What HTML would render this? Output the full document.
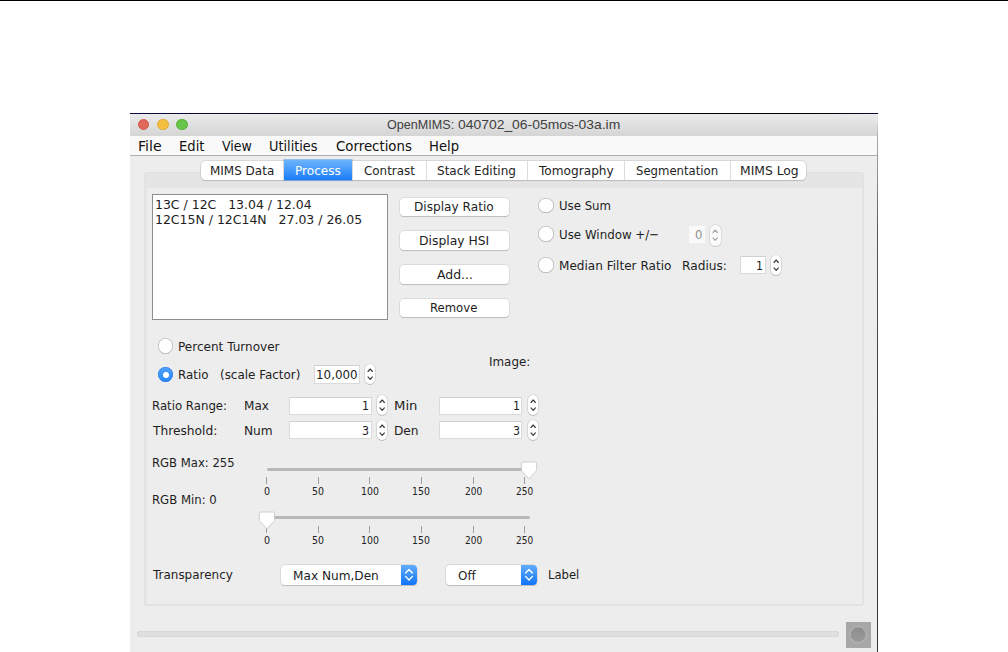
<!DOCTYPE html>
<html lang="en"><head><meta charset="utf-8"><title>OpenMIMS: 040702_06-05mos-03a.im</title>
<style>
html,body{margin:0;padding:0;background:#fff;}
body{width:1008px;height:652px;position:relative;overflow:hidden;font-family:"DejaVu Sans","Liberation Sans",sans-serif;}
.a{position:absolute;box-sizing:border-box;}
.t{position:absolute;white-space:pre;transform-origin:0 50%;display:block;}
#topline{left:0;top:0;width:1008px;height:1px;background:#000;}
#win{left:130px;top:113px;width:748px;height:539px;background:#ededed;overflow:hidden;}
#winborder{left:0;top:0;width:748px;height:1px;background:linear-gradient(90deg,#0c0c44,#000 55%,#000 92%,#0c0c44);}
#titlebar{left:0;top:1px;width:748px;height:21.5px;background:linear-gradient(#ebebeb,#d5d5d5);border-radius:5px 5px 0 0;}
#menubar{left:0;top:22.5px;width:748px;height:19.5px;background:#f9f9f9;}
#menusep{left:0;top:42px;width:748px;height:1.3px;background:#adadad;}
#rightedge{left:747px;top:8px;width:1px;height:531px;background:linear-gradient(rgba(160,160,160,0) 0px,#a8a8a8 18px,#8a8a8a 60px,#555 110px,#3c3c3c 300px,#333 531px);}
.tl{width:11.6px;height:11.6px;border-radius:50%;top:5.9px;}
#tl-r{left:7.9px;background:#e1695b;border:0.5px solid #d05a4c;}
#tl-y{left:27.1px;background:#f4bf41;border:0.5px solid #dfa935;}
#tl-g{left:46.2px;background:#68c54a;border:0.5px solid #55ae3a;}
/* tab pane */
#pane{left:14px;top:59.3px;width:719.6px;height:433.7px;background:#e5e5e5;border-radius:4px;box-shadow:inset 0 0 0 0.6px #dedede;}
#paneinner{left:3px;top:15.6px;width:715.2px;height:415.7px;background:#ededed;border-radius:1px;}
#tabs{left:71px;top:47.5px;width:605.3px;height:19.3px;background:#fff;border-radius:4.5px;box-shadow:0 0 0 0.6px #c4c4c4,0 1px 0.8px rgba(0,0,0,0.22);}
.tabdiv{top:0px;width:1px;height:19.3px;background:#dcdcdc;}
#tabsel{left:82.5px;top:-0.7px;width:68.6px;height:20.2px;background:linear-gradient(#6cb4fb,#1b7df8);box-shadow:0 0 0 0.5px #3a8be6;}
/* list */
#list{left:22px;top:81px;width:236px;height:126px;background:#fff;border:1px solid #8e8e8e;}
/* buttons */
.btn{left:270px;width:108.5px;height:18.8px;background:#fff;border-radius:4px;box-shadow:0 0 0 0.5px #c9c9c9,0 1px 0.7px rgba(0,0,0,0.25);}
/* radios */
.radio{width:15.4px;height:15.4px;border-radius:50%;background:#fff;box-shadow:inset 0 0 0 0.8px #bdbdbd, inset 0 -0.6px 0.5px #a5a5a5;}
.radio.on{background:linear-gradient(#4da2fb,#2a86f6);box-shadow:inset 0 0 0 0.5px #2f7fe6;}
.radio.on::after{content:"";position:absolute;left:4.7px;top:4.7px;width:6px;height:6px;border-radius:50%;background:#fff;}
/* spinner fields */
.field{background:#fff;border:1px solid #dadada;border-top-color:#d0d0d0;}
.step{width:10.4px;height:20.2px;border-radius:5.2px;background:#fff;box-shadow:0 0 0 0.6px #c6c6c6,0 1px 0.6px rgba(0,0,0,0.2);}
.step svg{position:absolute;left:0;top:0;}
/* sliders */
.track{height:3px;border-radius:1.5px;background:#b8b8b8;}
.tick{width:1px;height:6.5px;background:#9e9e9e;}
/* combos */
.combo{height:19.2px;background:#fff;border-radius:4px;box-shadow:0 0 0 0.5px #c9c9c9,0 1px 0.7px rgba(0,0,0,0.25);}
.combo .arrow{position:absolute;right:0;top:0;width:15.8px;height:19.2px;border-radius:0 4px 4px 0;background:linear-gradient(#62adfb,#1273f8);}
.combo svg{position:absolute;left:0;top:0;}
/* progress */
#prog{left:7.2px;top:518.2px;width:701.5px;height:6px;border-radius:3px;background:#dfdfdf;box-shadow:inset 0 0 0 0.6px #d2d2d2;}
#stop{left:716px;top:509px;width:24.7px;height:25.5px;background:#a7a7a7;}
.lib{font-family:"Liberation Sans",sans-serif;}

</style></head>
<body>
<div class="a" id="topline"></div>
<div class="a" id="win">
  <div class="a" id="titlebar"></div>
  <div class="a" id="winborder"></div>
  <div class="a tl" id="tl-r"></div><div class="a tl" id="tl-y"></div><div class="a tl" id="tl-g"></div>
  <div class="a" id="menubar"></div>
  <div class="a" id="menusep"></div>
  <div class="a" id="rightedge"></div>
  <div class="a" id="pane"><div class="a" id="paneinner"></div></div>
  <div class="a" id="tabs">
    <div class="a" id="tabsel"></div>
    <div class="a tabdiv" style="left:82px"></div>
    <div class="a tabdiv" style="left:151px"></div>
    <div class="a tabdiv" style="left:225px"></div>
    <div class="a tabdiv" style="left:326px"></div>
    <div class="a tabdiv" style="left:423.2px"></div>
    <div class="a tabdiv" style="left:528.5px"></div>
  </div>
  <div class="a" id="list"></div>
  <div class="a btn" style="top:84.5px"></div>
  <div class="a btn" style="top:118.3px"></div>
  <div class="a btn" style="top:151.9px"></div>
  <div class="a btn" style="top:185.5px"></div>
  <!-- right radios -->
  <div class="a radio" style="left:408.3px;top:84.6px"></div>
  <div class="a radio" style="left:408.3px;top:113.4px"></div>
  <div class="a radio" style="left:408.3px;top:144.3px"></div>
  <!-- spinner window -->
  <div class="a" style="left:558.5px;top:112.5px;width:16.7px;height:17.7px;background:#fafafa"></div>
  <div class="a step" style="left:580.4px;top:112.4px;opacity:.8"><svg width="10.4" height="20.2" viewBox="0 0 10.4 20.2"><path d="M3 7.5 L5.2 5 L7.4 7.5 M3 12.9 L5.2 15.4 L7.4 12.9" fill="none" stroke="#9a9a9a" stroke-width="1.2" stroke-linecap="round" stroke-linejoin="round"/></svg></div>
  <!-- spinner radius -->
  <div class="a field" style="left:610.4px;top:143.2px;width:25.4px;height:18px"></div>
  <div class="a step" style="left:640.5px;top:142px"><svg width="10.4" height="20.2" viewBox="0 0 10.4 20.2"><path d="M3 7.5 L5.2 5 L7.4 7.5 M3 12.9 L5.2 15.4 L7.4 12.9" fill="none" stroke="#3a3a3a" stroke-width="1.15" stroke-linecap="round" stroke-linejoin="round"/></svg></div>
  <!-- left radios -->
  <div class="a radio" style="left:28px;top:225.2px"></div>
  <div class="a radio on" style="left:28px;top:254px"></div>
  <!-- spinner scale -->
  <div class="a field" style="left:183.9px;top:252px;width:45.7px;height:18.8px"></div>
  <div class="a step" style="left:234.5px;top:251.3px"><svg width="10.4" height="20.2" viewBox="0 0 10.4 20.2"><path d="M3 7.5 L5.2 5 L7.4 7.5 M3 12.9 L5.2 15.4 L7.4 12.9" fill="none" stroke="#3a3a3a" stroke-width="1.15" stroke-linecap="round" stroke-linejoin="round"/></svg></div>
  <!-- ratio range / threshold fields -->
  <div class="a field" style="left:158.5px;top:283.5px;width:83.2px;height:18px"></div>
  <div class="a step" style="left:246.7px;top:282.2px"><svg width="10.4" height="20.2" viewBox="0 0 10.4 20.2"><path d="M3 7.5 L5.2 5 L7.4 7.5 M3 12.9 L5.2 15.4 L7.4 12.9" fill="none" stroke="#3a3a3a" stroke-width="1.15" stroke-linecap="round" stroke-linejoin="round"/></svg></div>
  <div class="a field" style="left:309.2px;top:283.5px;width:83.3px;height:18px"></div>
  <div class="a step" style="left:397.5px;top:282.2px"><svg width="10.4" height="20.2" viewBox="0 0 10.4 20.2"><path d="M3 7.5 L5.2 5 L7.4 7.5 M3 12.9 L5.2 15.4 L7.4 12.9" fill="none" stroke="#3a3a3a" stroke-width="1.15" stroke-linecap="round" stroke-linejoin="round"/></svg></div>
  <div class="a field" style="left:158.5px;top:308.3px;width:83.2px;height:17.9px"></div>
  <div class="a step" style="left:246.7px;top:307.2px"><svg width="10.4" height="20.2" viewBox="0 0 10.4 20.2"><path d="M3 7.5 L5.2 5 L7.4 7.5 M3 12.9 L5.2 15.4 L7.4 12.9" fill="none" stroke="#3a3a3a" stroke-width="1.15" stroke-linecap="round" stroke-linejoin="round"/></svg></div>
  <div class="a field" style="left:309.2px;top:308.3px;width:83.3px;height:17.9px"></div>
  <div class="a step" style="left:397.5px;top:307.2px"><svg width="10.4" height="20.2" viewBox="0 0 10.4 20.2"><path d="M3 7.5 L5.2 5 L7.4 7.5 M3 12.9 L5.2 15.4 L7.4 12.9" fill="none" stroke="#3a3a3a" stroke-width="1.15" stroke-linecap="round" stroke-linejoin="round"/></svg></div>
  <!-- sliders -->
  <div class="a tick" style="left:136.0px;top:364px"></div><div class="a tick" style="left:187.7px;top:364px"></div><div class="a tick" style="left:239.4px;top:364px"></div><div class="a tick" style="left:291.0px;top:364px"></div><div class="a tick" style="left:342.7px;top:364px"></div><div class="a tick" style="left:394.4px;top:364px"></div><div class="a tick" style="left:136.0px;top:413px"></div><div class="a tick" style="left:187.7px;top:413px"></div><div class="a tick" style="left:239.4px;top:413px"></div><div class="a tick" style="left:291.0px;top:413px"></div><div class="a tick" style="left:342.7px;top:413px"></div><div class="a tick" style="left:394.4px;top:413px"></div>
  
  <div class="a track" style="left:136.5px;top:354.8px;width:263.5px"></div>
  <div class="a track" style="left:136.5px;top:403.3px;width:263.5px"></div>
  <svg class="a" style="left:390.4px;top:348.4px" width="18" height="19" viewBox="0 0 18 19"><path d="M3.2 1 H14.8 Q16.6 1 16.6 2.8 V9.6 L9 17.8 L1.4 9.6 V2.8 Q1.4 1 3.2 1 Z" fill="#fff" stroke="#c4c4c4" stroke-width="0.8"/></svg>
  <svg class="a" style="left:128px;top:398.1px" width="18" height="19" viewBox="0 0 18 19"><path d="M3.2 1 H14.8 Q16.6 1 16.6 2.8 V9.6 L9 17.8 L1.4 9.6 V2.8 Q1.4 1 3.2 1 Z" fill="#fff" stroke="#c4c4c4" stroke-width="0.8"/></svg>
  
  <!-- combos -->
  <div class="a combo" style="left:150.7px;top:452.4px;width:136.2px"><div class="arrow"><svg width="15.8" height="19.2" viewBox="0 0 15.8 19.2"><path d="M4.6 8 L8 4.4 L11.4 8 M4.6 11.4 L8 15 L11.4 11.4" fill="none" stroke="#fff" stroke-width="1.4" stroke-linecap="round" stroke-linejoin="round"/></svg></div></div>
  <div class="a combo" style="left:315.8px;top:452.4px;width:91.2px"><div class="arrow"><svg width="15.8" height="19.2" viewBox="0 0 15.8 19.2"><path d="M4.6 8 L8 4.4 L11.4 8 M4.6 11.4 L8 15 L11.4 11.4" fill="none" stroke="#fff" stroke-width="1.4" stroke-linecap="round" stroke-linejoin="round"/></svg></div></div>
  <!-- progress + stop -->
  <div class="a" id="prog"></div>
  <div class="a" id="stop"><svg width="24.6" height="25.2" viewBox="0 0 24.6 25.2"><defs><linearGradient id="sg" x1="0" y1="0" x2="0" y2="1"><stop offset="0" stop-color="#8c8c8c"/><stop offset="1" stop-color="#9a9a9a"/></linearGradient></defs><polygon points="8.83,4.8 15.37,4.8 20,9.43 20,15.97 15.37,20.6 8.83,20.6 4.2,15.97 4.2,9.43" fill="url(#sg)" stroke="#b1b1b1" stroke-width="1.5" stroke-linejoin="round"/></svg></div>
</div>

<div id="texts">
<span class="t lib" style="left:387.13px;top:118.30px;font-size:13px;line-height:13px;color:#404040;transform:scaleX(0.9692)">OpenMIMS:</span>
<span class="t lib" style="left:457.85px;top:118.30px;font-size:13px;line-height:13px;color:#404040;transform:scaleX(1.0692)">040702_06-05mos-03a.im</span>
<span class="t" style="left:137.86px;top:138.50px;font-size:14px;line-height:14px;color:#111;transform:scaleX(1.0093)">File</span>
<span class="t" style="left:178.69px;top:138.50px;font-size:14px;line-height:14px;color:#111;transform:scaleX(0.9388)">Edit</span>
<span class="t" style="left:222.17px;top:138.50px;font-size:14px;line-height:14px;color:#111;transform:scaleX(0.9001)">View</span>
<span class="t" style="left:268.79px;top:138.50px;font-size:14px;line-height:14px;color:#111;transform:scaleX(0.9207)">Utilities</span>
<span class="t" style="left:335.90px;top:138.50px;font-size:14px;line-height:14px;color:#111;transform:scaleX(0.9524)">Corrections</span>
<span class="t" style="left:429.44px;top:138.50px;font-size:14px;line-height:14px;color:#111;transform:scaleX(0.9417)">Help</span>
<span class="t" style="left:209.50px;top:164.00px;font-size:13px;line-height:13px;color:#1e1e1e;transform:scaleX(0.9217)">MIMS Data</span>
<span class="t" style="left:294.99px;top:164.00px;font-size:13px;line-height:13px;color:#fff;transform:scaleX(0.9309)">Process</span>
<span class="t" style="left:363.94px;top:164.00px;font-size:13px;line-height:13px;color:#1e1e1e;transform:scaleX(0.9159)">Contrast</span>
<span class="t" style="left:437.14px;top:164.00px;font-size:13px;line-height:13px;color:#1e1e1e;transform:scaleX(0.9244)">Stack Editing</span>
<span class="t" style="left:539.25px;top:164.00px;font-size:13px;line-height:13px;color:#1e1e1e;transform:scaleX(0.9338)">Tomography</span>
<span class="t" style="left:636.40px;top:164.00px;font-size:13px;line-height:13px;color:#1e1e1e;transform:scaleX(0.8987)">Segmentation</span>
<span class="t" style="left:740.22px;top:164.00px;font-size:13px;line-height:13px;color:#1e1e1e;transform:scaleX(0.9486)">MIMS Log</span>
<span class="t" style="left:154.79px;top:197.50px;font-size:13px;line-height:13px;color:#1e1e1e;transform:scaleX(0.9590)">13C / 12C   13.04 / 12.04</span>
<span class="t" style="left:154.79px;top:213.30px;font-size:13px;line-height:13px;color:#1e1e1e;transform:scaleX(0.9595)">12C15N / 12C14N   27.03 / 26.05</span>
<span class="t" style="left:414.49px;top:200.00px;font-size:13px;line-height:13px;color:#1e1e1e;transform:scaleX(0.9326)">Display Ratio</span>
<span class="t" style="left:418.72px;top:234.00px;font-size:13px;line-height:13px;color:#1e1e1e;transform:scaleX(0.9503)">Display HSI</span>
<span class="t" style="left:436.90px;top:267.50px;font-size:13px;line-height:13px;color:#1e1e1e;transform:scaleX(0.9561)">Add...</span>
<span class="t" style="left:430.28px;top:300.75px;font-size:13px;line-height:13px;color:#1e1e1e;transform:scaleX(0.8971)">Remove</span>
<span class="t" style="left:558.98px;top:199.00px;font-size:13px;line-height:13px;color:#1e1e1e;transform:scaleX(0.9019)">Use Sum</span>
<span class="t" style="left:558.97px;top:228.00px;font-size:13px;line-height:13px;color:#1e1e1e;transform:scaleX(0.9111)">Use Window +/−</span>
<span class="t" style="left:558.50px;top:259.00px;font-size:13px;line-height:13px;color:#1e1e1e;transform:scaleX(0.9277)">Median Filter Ratio</span>
<span class="t" style="left:682.39px;top:259.00px;font-size:13px;line-height:13px;color:#1e1e1e;transform:scaleX(0.9365)">Radius:</span>
<span class="t" style="left:695.25px;top:227.90px;font-size:13px;line-height:13px;color:#8e8e8e;transform:scaleX(0.8904)">0</span>
<span class="t" style="left:755.51px;top:259.00px;font-size:13px;line-height:13px;color:#1e1e1e;transform:scaleX(0.8500)">1</span>
<span class="t" style="left:178.10px;top:339.50px;font-size:13px;line-height:13px;color:#1e1e1e;transform:scaleX(0.9264)">Percent Turnover</span>
<span class="t" style="left:178.11px;top:368.25px;font-size:13px;line-height:13px;color:#1e1e1e;transform:scaleX(0.9122)">Ratio</span>
<span class="t" style="left:220.06px;top:368.25px;font-size:13px;line-height:13px;color:#1e1e1e;transform:scaleX(0.9179)">(scale Factor)</span>
<span class="t" style="left:316.04px;top:368.40px;font-size:13px;line-height:13px;color:#1e1e1e;transform:scaleX(0.9159)">10,000</span>
<span class="t" style="left:489.01px;top:355.00px;font-size:13px;line-height:13px;color:#1e1e1e;transform:scaleX(0.9162)">Image:</span>
<span class="t" style="left:152.02px;top:398.75px;font-size:13px;line-height:13px;color:#1e1e1e;transform:scaleX(0.9030)">Ratio Range:</span>
<span class="t" style="left:244.25px;top:398.75px;font-size:13px;line-height:13px;color:#1e1e1e;transform:scaleX(0.9279)">Max</span>
<span class="t" style="left:361.71px;top:398.85px;font-size:13px;line-height:13px;color:#1e1e1e;transform:scaleX(0.8500)">1</span>
<span class="t" style="left:394.40px;top:398.75px;font-size:13px;line-height:13px;color:#1e1e1e;transform:scaleX(1.0159)">Min</span>
<span class="t" style="left:512.51px;top:398.85px;font-size:13px;line-height:13px;color:#1e1e1e;transform:scaleX(0.8500)">1</span>
<span class="t" style="left:153.00px;top:424.25px;font-size:13px;line-height:13px;color:#1e1e1e;transform:scaleX(0.9403)">Threshold:</span>
<span class="t" style="left:244.24px;top:424.25px;font-size:13px;line-height:13px;color:#1e1e1e;transform:scaleX(0.9370)">Num</span>
<span class="t" style="left:361.86px;top:424.30px;font-size:13px;line-height:13px;color:#1e1e1e;transform:scaleX(0.8500)">3</span>
<span class="t" style="left:394.49px;top:424.25px;font-size:13px;line-height:13px;color:#1e1e1e;transform:scaleX(0.9352)">Den</span>
<span class="t" style="left:512.66px;top:424.30px;font-size:13px;line-height:13px;color:#1e1e1e;transform:scaleX(0.8500)">3</span>
<span class="t" style="left:152.03px;top:456.00px;font-size:13px;line-height:13px;color:#1e1e1e;transform:scaleX(0.8944)">RGB Max: 255</span>
<span class="t" style="left:152.03px;top:493.00px;font-size:13px;line-height:13px;color:#1e1e1e;transform:scaleX(0.8995)">RGB Min: 0</span>
<span class="t" style="left:153.00px;top:568.00px;font-size:13px;line-height:13px;color:#1e1e1e;transform:scaleX(0.9202)">Transparency</span>
<span class="t" style="left:292.59px;top:568.50px;font-size:13px;line-height:13px;color:#1e1e1e;transform:scaleX(0.9320)">Max Num,Den</span>
<span class="t" style="left:457.89px;top:568.50px;font-size:13px;line-height:13px;color:#1e1e1e;transform:scaleX(0.9230)">Off</span>
<span class="t" style="left:547.93px;top:568.00px;font-size:13px;line-height:13px;color:#1e1e1e;transform:scaleX(0.8931)">Label</span>
<span class="t" style="left:263.65px;top:487.25px;font-size:10px;line-height:10px;color:#222;transform:scaleX(0.9464)">0</span>
<span class="t" style="left:312.48px;top:487.25px;font-size:10px;line-height:10px;color:#222;transform:scaleX(0.9399)">50</span>
<span class="t" style="left:360.68px;top:487.25px;font-size:10px;line-height:10px;color:#222;transform:scaleX(0.9356)">100</span>
<span class="t" style="left:412.36px;top:487.25px;font-size:10px;line-height:10px;color:#222;transform:scaleX(0.9356)">150</span>
<span class="t" style="left:464.72px;top:487.25px;font-size:10px;line-height:10px;color:#222;transform:scaleX(0.8990)">200</span>
<span class="t" style="left:516.40px;top:487.25px;font-size:10px;line-height:10px;color:#222;transform:scaleX(0.8990)">250</span>
<span class="t" style="left:263.65px;top:536.00px;font-size:10px;line-height:10px;color:#222;transform:scaleX(0.9464)">0</span>
<span class="t" style="left:312.48px;top:536.00px;font-size:10px;line-height:10px;color:#222;transform:scaleX(0.9399)">50</span>
<span class="t" style="left:360.68px;top:536.00px;font-size:10px;line-height:10px;color:#222;transform:scaleX(0.9356)">100</span>
<span class="t" style="left:412.36px;top:536.00px;font-size:10px;line-height:10px;color:#222;transform:scaleX(0.9356)">150</span>
<span class="t" style="left:464.72px;top:536.00px;font-size:10px;line-height:10px;color:#222;transform:scaleX(0.8990)">200</span>
<span class="t" style="left:516.40px;top:536.00px;font-size:10px;line-height:10px;color:#222;transform:scaleX(0.8990)">250</span>
</div>
</body></html>
